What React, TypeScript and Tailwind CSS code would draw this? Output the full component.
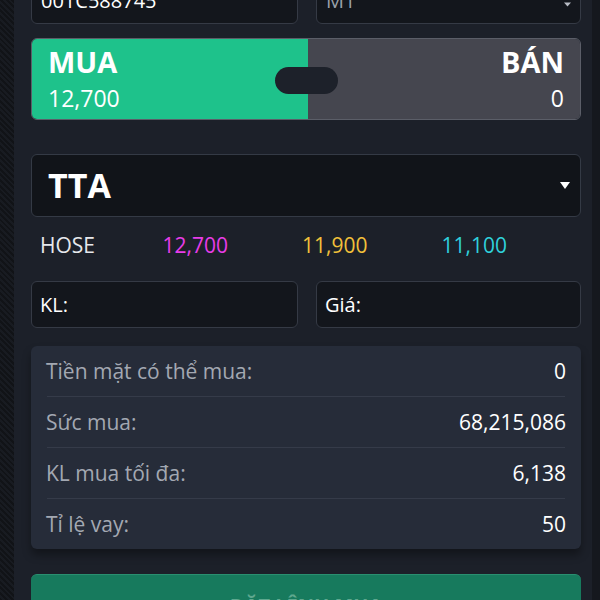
import React from 'react';

const font = { fontFamily: '"Open Sans", "Noto Sans", sans-serif' };

function InfoRow({ label, value, last }: { label: string; value: string; last?: boolean }) {
    return (
        <>
            <div className="h-[50px] flex items-center justify-between px-[15px] pt-[2px]">
                <span className="text-[21px] text-[#a3a8b2]">{label}</span>
                <span className="text-[21px] text-white">{value}</span>
            </div>
            {!last && <div className="h-px mx-[16px] bg-[#353b49]" />}
        </>
    );
}

export default function App() {
    return (
        <div className="w-[600px] h-[600px] overflow-hidden flex bg-[#13161b]" style={font}>
            <div className="w-[14px] shrink-0 bg-[repeating-linear-gradient(45deg,#111317_0px,#111317_2px,#181b21_2px,#181b21_4px)]" />
            <div className="w-[578px] shrink-0 bg-[#1c2029] pl-[17px] pr-[11px] flex flex-col">
                {/* account + sub account */}
                <div className="-mt-[22px] shrink-0 flex gap-[18px]">
                    <div className="w-[267px] h-[46px] rounded-md border border-[#353a45] bg-[#13161c] flex items-center px-[9px]">
                        <span className="text-[20px] text-white">001C588745</span>
                    </div>
                    <div className="w-[265px] h-[46px] rounded-md border border-[#353a45] bg-[#13161c] flex items-center justify-between pl-[9px] pr-[8px]">
                        <span className="text-[20px] text-[#9aa0aa]">M1</span>
                        <svg width="9" height="14" viewBox="0 0 9 14">
                            <path d="M1 5.5 L4.5 1.5 L8 5.5 Z" fill="#b8bcc4" />
                            <path d="M1 8.5 L4.5 12.5 L8 8.5 Z" fill="#b8bcc4" />
                        </svg>
                    </div>
                </div>

                {/* buy / sell toggle */}
                <div className="relative shrink-0 mt-[14px] h-[82px] w-[550px] rounded-md border border-[#5b5e68] overflow-hidden flex">
                    <div className="w-[276px] bg-[#1ec28b] flex flex-col justify-center pl-[16px] pt-[1px]">
                        <span className="text-[29px] font-bold leading-[36px] text-white">MUA</span>
                        <span className="text-[23px] leading-[36px] text-white">12,700</span>
                    </div>
                    <div className="flex-1 bg-[#45464f] flex flex-col justify-center items-end pr-[16px] pt-[1px]">
                        <span className="text-[29px] font-bold leading-[36px] text-white">BÁN</span>
                        <span className="text-[23px] leading-[36px] text-white">0</span>
                    </div>
                    <div className="absolute left-[243px] top-[28px] w-[63px] h-[27px] rounded-full bg-[#1d212a]" />
                </div>

                {/* symbol select */}
                <div className="shrink-0 mt-[34px] h-[63px] w-[550px] rounded-md border border-[#343a45] bg-[#111419] flex items-center justify-between pl-[16px] pr-[10px]">
                    <span className="text-[34px] font-bold text-white">TTA</span>
                    <svg width="10" height="7" viewBox="0 0 10 7">
                        <path d="M0 0 L10 0 L5 7 Z" fill="#ffffff" />
                    </svg>
                </div>

                {/* prices */}
                <div className="shrink-0 mt-[15px] h-[28px] flex items-center text-[21px]">
                    <span className="w-[132px] pl-[9px] text-[#e6e8ec]">HOSE</span>
                    <span className="w-[140px] text-[#e83ce8]">12,700</span>
                    <span className="w-[140px] text-[#f2c13a]">11,900</span>
                    <span className="w-[140px] text-[#2fd0dc]">11,100</span>
                </div>

                {/* qty / price */}
                <div className="shrink-0 mt-[21px] flex gap-[18px]">
                    <div className="w-[267px] h-[47px] rounded-md border border-[#353a45] bg-[#13161c] flex items-center px-[8px]">
                        <span className="text-[20px] text-white">KL:</span>
                    </div>
                    <div className="w-[265px] h-[47px] rounded-md border border-[#353a45] bg-[#13161c] flex items-center px-[8px]">
                        <span className="text-[20px] text-white">Giá:</span>
                    </div>
                </div>

                {/* info card */}
                <div className="shrink-0 mt-[18px] w-[550px] rounded-md bg-[#262c39] shadow-[0_6px_8px_rgba(0,0,0,0.35)]">
                    <InfoRow label="Tiền mặt có thể mua:" value="0" />
                    <InfoRow label="Sức mua:" value="68,215,086" />
                    <InfoRow label="KL mua tối đa:" value="6,138" />
                    <InfoRow label="Tỉ lệ vay:" value="50" last />
                </div>

                {/* submit */}
                <div className="shrink-0 mt-[25px] w-[550px] h-[50px] rounded-md bg-[#177a5d] border-t border-[#2a8f70] flex items-start justify-center pt-[16px]">
                    <span className="text-[20px] font-bold text-[#5fa88f]">ĐẶT LỆNH MUA</span>
                </div>
            </div>
            <div className="w-[8px] shrink-0 bg-[#15181e]" />
        </div>
    );
}
